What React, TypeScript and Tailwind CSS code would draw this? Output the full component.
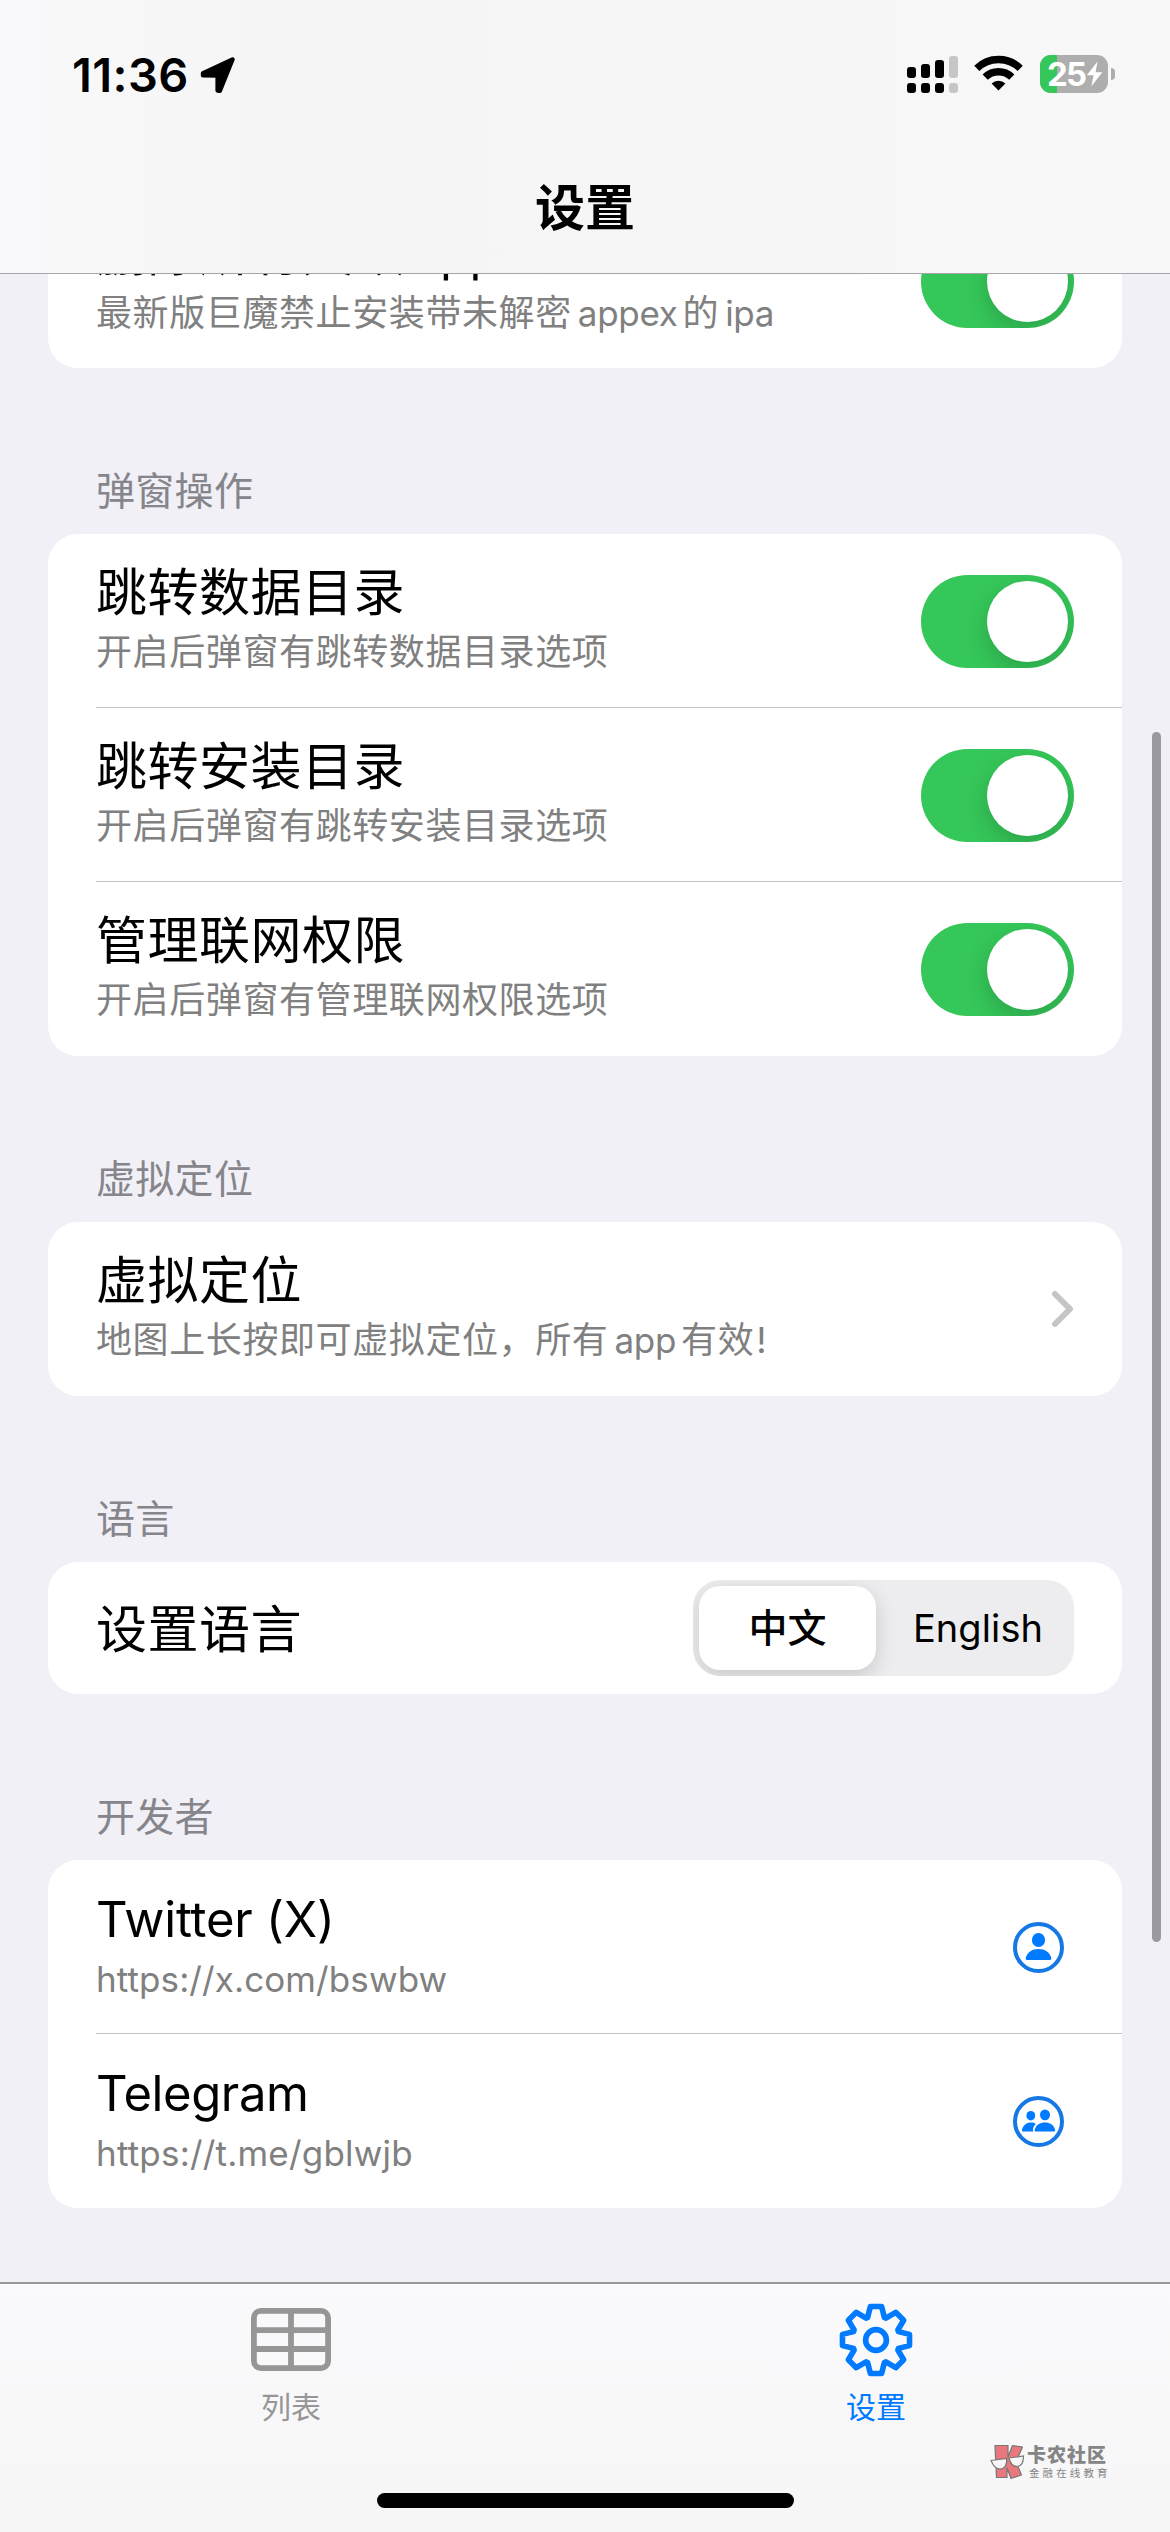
import type { ReactNode } from "react";

const popupRows = [
  { title: "跳转数据目录", desc: "开启后弹窗有跳转数据目录选项" },
  { title: "跳转安装目录", desc: "开启后弹窗有跳转安装目录选项" },
  { title: "管理联网权限", desc: "开启后弹窗有管理联网权限选项" },
];

// eight teeth, rounded by the stroke join
const gearPoints = Array.from({ length: 8 }, (_, i) => {
  const point = (deg: number, r: number) => {
    const a = ((deg - 90) * Math.PI) / 180;
    return `${(37 + r * Math.cos(a)).toFixed(2)},${(37 + r * Math.sin(a)).toFixed(2)}`;
  };
  const base = i * 45;
  return [point(base - 9.5, 34), point(base + 9.5, 34), point(base + 20.5, 24), point(base + 24.5, 24)].join(" ");
}).join(" ");

function StatusBar() {
  return (
    <div className="flex h-[150px] items-start justify-between pl-[72px] pr-[55px] pt-[55px]">
      <div className="flex items-center">
        <span className="w-[128px] whitespace-nowrap text-[47px] font-semibold leading-[40px] tracking-[0.4px]">11:36</span>
        <svg width="37" height="37" viewBox="0 0 37 37" className="mt-px">
          <path d="M3 16.2 32.5 2.5 19.8 33.8 17.6 33.5V18.6L3 18.3Z" fill="#000" stroke="#000" strokeWidth="4.4" strokeLinejoin="round" />
        </svg>
      </div>
      <div className="flex items-start">
        <svg width="52" height="38" viewBox="0 0 52 38">
          <g fill="#000">
            <rect x="0" y="12" width="9" height="11" rx="3" />
            <rect x="14" y="9" width="9" height="14" rx="3" />
            <rect x="28" y="5" width="9" height="18" rx="3" />
            <rect x="0" y="28" width="9" height="10" rx="3" />
            <rect x="14" y="28" width="9" height="10" rx="3" />
            <rect x="28" y="28" width="9" height="10" rx="3" />
          </g>
          <rect x="42" y="1" width="9" height="22" rx="3" fill="#c6c6c6" />
          <rect x="42" y="28" width="9" height="10" rx="3" fill="#c6c6c6" />
        </svg>
        <svg width="49" height="36" viewBox="0 0 49 36" className="ml-[15px]">
          <g fill="none" stroke="#000" strokeWidth="7.4">
            <path d="M2.8 13.4A31 31 0 0 1 46.2 13.4" />
            <path d="M11.2 22.2A19 19 0 0 1 37.8 22.2" />
          </g>
          <path d="M24.5 35.5 17.6 28.4A10 10 0 0 1 31.4 28.4Z" fill="#000" />
        </svg>
        <div className="relative ml-[17px] h-[38px] w-[68px] overflow-hidden rounded-[11px] bg-[#aeaeae]">
          <div className="h-full w-[17px] bg-[#35c759]"></div>
          <div className="absolute inset-0 flex items-center pl-[7px]">
            <span className="w-[39px] text-[33px] font-bold leading-[38px] tracking-[-1.8px] text-white">25</span>
            <svg width="17" height="26" viewBox="0 0 17 26">
              <path d="M11.5 0.5 0.8 14.2H7.6L5.3 25.5 16.3 11.2H9.6Z" fill="#fff" />
            </svg>
          </div>
        </div>
        <div className="ml-[3px] mt-[13px] h-[12px] w-[4px] rounded-r-full bg-[#aeaeae]"></div>
      </div>
    </div>
  );
}

function Toggle() {
  return (
    <div className="mt-[41px] h-[93px] w-[153px] shrink-0 self-start overflow-hidden rounded-full bg-[#35c759] p-[6px]">
      <div className="ml-auto h-[81px] w-[81px] rounded-full bg-white shadow-[0_9px_24px_rgba(0,0,0,0.18)]"></div>
    </div>
  );
}

function Row({ title, desc, last, children }: { title: ReactNode; desc: ReactNode; last?: boolean; children: ReactNode }) {
  return (
    <div className={last ? "ml-[48px] flex h-[174px] items-center justify-between pr-[48px]" : "ml-[48px] flex h-[174px] items-center justify-between border-b border-[#c4c4c7] pr-[48px]"}>
      <div className="h-full whitespace-nowrap pt-[29px]">
        <div className="text-[51px] leading-[60px] tracking-[0.5px]">{title}</div>
        <div className="mt-[5px] text-[36px] leading-[48px] tracking-[0.6px] text-[#808080]">{desc}</div>
      </div>
      {children}
    </div>
  );
}

function Section({ label, children }: { label: string; children: ReactNode }) {
  return (
    <section>
      <h2 className="mb-[17px] ml-[96px] mt-[97px] text-[39px] leading-[52px] tracking-[0.3px] text-[#85858b]">{label}</h2>
      <div className="mx-[48px] rounded-[30px] bg-white">{children}</div>
    </section>
  );
}

function App() {
  return (
    <div className="relative flex h-[2532px] w-[1170px] flex-col overflow-hidden bg-[#f1f0f6] font-['Inter','Noto_Sans_CJK_SC',sans-serif] text-black">
      <header className="h-[274px] shrink-0 border-b border-[#a5a5aa] bg-linear-to-r from-[#f9f9fb] via-[#f5f5f5] via-25% to-[#f8f8f9]">
        <StatusBar />
        <h1 className="mt-[28px] text-center text-[50px] font-bold leading-[60px]">设置</h1>
      </header>

      <main className="h-[2008px] shrink-0 overflow-hidden">
        <div className="mx-[48px] -mt-[80px] rounded-[30px] bg-white">
          <Row
            last
            title={<>删除所有失效<span className="ml-[8px] text-[49px] tracking-[-0.5px]">appex</span></>}
            desc={<>最新版巨魔禁止安装带未解密<span className="ml-[6px] mr-[5px] text-[35px] tracking-[-0.3px]">appex</span>的<span className="ml-[6px] text-[35px] tracking-[-0.3px]">ipa</span></>}
          >
            <Toggle />
          </Row>
        </div>

        <Section label="弹窗操作">
          {popupRows.map((row, index) => (
            <Row key={row.title} title={row.title} desc={row.desc} last={index === popupRows.length - 1}>
              <Toggle />
            </Row>
          ))}
        </Section>

        <Section label="虚拟定位">
          <Row last title="虚拟定位" desc={<>地图上长按即可虚拟定位，所有<span className="ml-[6px] mr-[5px] text-[35px] tracking-[-0.3px]">app</span>有效<span className="ml-[2px]">!</span></>}>
            <svg width="24" height="38" viewBox="0 0 24 38">
              <path d="M5 4 20 19 5 34" fill="none" stroke="#c5c5c7" strokeWidth="6" strokeLinecap="round" strokeLinejoin="round" />
            </svg>
          </Row>
        </Section>

        <Section label="语言">
          <div className="flex h-[132px] items-center justify-between px-[48px]">
            <span className="mt-[3px] text-[51px] leading-[60px] tracking-[0.5px]">设置语言</span>
            <div className="flex h-[96px] w-[381px] overflow-hidden rounded-[27px] bg-[#ededef] p-[6px] text-[39px] leading-[84px]">
              <div className="w-[177px] rounded-[21px] bg-white text-center font-medium shadow-[0_6px_20px_rgba(0,0,0,0.16)]">中文</div>
              <div className="ml-[12px] flex-1 text-center text-[38px] tracking-[0.1px]">English</div>
            </div>
          </div>
        </Section>

        <Section label="开发者">
          <Row title={<span className="text-[49px] tracking-[-0.2px]">Twitter (X)</span>} desc={<span className="text-[35px] tracking-[0.1px]">https://x.com/bswbw</span>}>
            <svg width="51" height="51" viewBox="0 0 51 51" className="mr-[10px] mt-[62px] self-start">
              <circle cx="25.5" cy="25.5" r="23.5" fill="none" stroke="#1679e3" strokeWidth="4" />
              <ellipse cx="25.5" cy="18" rx="6.6" ry="7.1" fill="#007aff" />
              <path d="M14 38C12.8 38 12.4 37 12.8 35.6 14.4 30.2 19.2 27 25.5 27S36.6 30.2 38.2 35.6C38.6 37 38.2 38 37 38Z" fill="#007aff" />
            </svg>
          </Row>
          <Row last title={<span className="text-[49px] tracking-[-0.4px]">Telegram</span>} desc={<span className="text-[35px] tracking-[0.2px]">https://t.me/gblwjb</span>}>
            <svg width="51" height="51" viewBox="0 0 51 51" className="mr-[10px] mt-[62px] self-start">
              <circle cx="25.5" cy="25.5" r="23.5" fill="none" stroke="#1679e3" strokeWidth="4" />
              <g fill="#007aff">
                <ellipse cx="17.8" cy="19.7" rx="4.4" ry="4.8" />
                <ellipse cx="32" cy="18.9" rx="5" ry="5.4" />
                <path d="M10 35.5C9 35.5 8.8 34.8 9 33.8 10 29.2 13.6 26.5 18 26.5 20 26.5 21.5 27 22.8 27.9 20.7 29.8 19.6 32.4 20.1 35.5Z" />
                <path d="M22.8 35.5C21.7 35.5 21.4 34.8 21.7 33.6 23 29.1 27 26.5 31.9 26.5S40.8 29.1 42 33.6C42.3 34.8 42 35.5 41 35.5Z" />
              </g>
            </svg>
          </Row>
        </Section>
      </main>

      <div className="absolute left-[1152px] top-[732px] h-[1210px] w-[9px] rounded-full bg-[#9a9a9e]"></div>

      <footer className="relative flex h-[250px] flex-col border-t-2 border-[#98989b] bg-linear-to-b from-[#fafafc] to-[#f6f6f7]">
        <nav className="flex h-[150px] text-[30px] leading-[36px]">
          <div className="flex w-1/2 flex-col items-center pt-[24px] pr-[3px] text-[#969696]">
            <svg width="80" height="63" viewBox="0 0 80 63" fill="none" stroke="currentColor" strokeWidth="5.8">
              <rect x="2.9" y="2.9" width="74.2" height="57.2" rx="7" />
              <path d="M40 3V60M3 22.2H77M3 41H77" />
            </svg>
            <span className="mt-[18px]">列表</span>
          </div>
          <div className="flex w-1/2 flex-col items-center pt-[19px] pr-[3px] text-[#007aff]">
            <svg width="74" height="74" viewBox="0 0 74 74" fill="none" stroke="currentColor" strokeWidth="5.6" strokeLinejoin="round">
              <polygon points={gearPoints} />
              <circle cx="37" cy="37" r="10.4" />
            </svg>
            <span className="mt-[12px]">设置</span>
          </div>
        </nav>
        <div className="mx-auto mt-[59px] h-[15px] w-[417px] rounded-full bg-black"></div>

        <div className="absolute left-[990px] top-[160px] flex text-[#858585]">
          <svg width="35" height="36" viewBox="0 0 35 36">
            <path d="M5 1.5H18V13L22.5 1.5 32.5 3 26 18 31.5 31 21 34.5 17 24V33.5H6.5Z" fill="#e9777e" stroke="#777" strokeWidth="1.2" strokeLinejoin="round" />
            <g fill="#f6f6f7" stroke="#777" strokeWidth="1.2">
              <path d="M1 16.5 16.5 14.5C17.5 20 15 25 10 25 5 25 3 21 1 16.5Z" />
              <path d="M19 14 33.5 12C33.5 18 31.5 22.5 27 22.5 22.5 22.5 20 18.5 19 14Z" />
            </g>
          </svg>
          <div className="ml-[2px] mt-px whitespace-nowrap">
            <div className="text-[19px] font-black leading-[22px] tracking-[1px]">卡农社区</div>
            <div className="ml-[2px] text-[10.5px] leading-[14px] tracking-[3.1px]">金融在线教育</div>
          </div>
        </div>
      </footer>
    </div>
  );
}

export default App;
